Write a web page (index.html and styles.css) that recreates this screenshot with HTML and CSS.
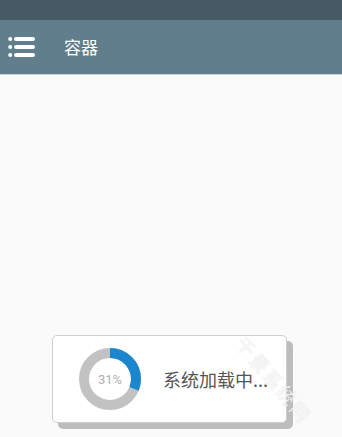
FILE: index.html
```html
<!DOCTYPE html>
<html lang="zh">
<head>
<meta charset="utf-8">
<link rel="stylesheet" href="styles.css">
</head>
<body>
<div class="statusbar"></div>
<header class="appbar">
  <svg class="menu" width="28" height="22" viewBox="0 0 28 22">
    <circle cx="2.2" cy="3" r="2" fill="#fff"/>
    <circle cx="2.2" cy="11" r="2" fill="#fff"/>
    <circle cx="2.2" cy="19" r="2" fill="#fff"/>
    <rect x="6" y="1" width="21" height="4" rx="2" fill="#fff"/>
    <rect x="6" y="9" width="21" height="4" rx="2" fill="#fff"/>
    <rect x="6" y="17" width="21" height="4" rx="2" fill="#fff"/>
  </svg>
  <span class="title">容器</span>
</header>
<main class="content">
  <div class="dialog">
    <div class="ring">
      <svg width="64" height="64" viewBox="0 0 64 64">
        <circle cx="32" cy="32" r="26" fill="none" stroke="#c2c2c2" stroke-width="10"/>
        <circle cx="32" cy="32" r="26" fill="none" stroke="#1a86d0" stroke-width="10"
          stroke-dasharray="50.65 200" transform="rotate(-90 32 32)"/>
      </svg>
      <span class="pct">31%</span>
    </div>
    <span class="msg">系统加载中...</span>
  </div>
  <div class="watermark">千景系统网</div>
</main>
</body>
</html>
```
FILE: styles.css
```css
html, body {
  margin: 0;
  padding: 0;
}
body {
  width: 342px;
  height: 437px;
  overflow: hidden;
  background: #fafafa;
  font-family: "Noto Sans CJK SC", "Noto Sans", sans-serif;
  display: flex;
  flex-direction: column;
}
.statusbar {
  height: 20px;
  background: #475b66;
  flex: none;
}
.appbar {
  height: 54px;
  background: #617e8c;
  border-bottom: 1px solid #c9d3d8;
  display: flex;
  align-items: center;
  flex: none;
}
.menu {
  margin-left: 8px;
}
.title {
  margin-left: 28px;
  color: #fff;
  font-size: 17px;
  line-height: 20px;
}
.content {
  flex: 1;
  position: relative;
  padding-top: 260px;
  padding-left: 52px;
}
.dialog {
  width: 233px;
  height: 86px;
  background: #fff;
  border: 1px solid #cfcfcf;
  border-radius: 5px;
  box-shadow: 6px 6px 0 #bdbdbd;
  display: flex;
  align-items: center;
}
.ring {
  position: relative;
  width: 64px;
  height: 64px;
  margin-left: 25px;
  flex: none;
}
.ring svg {
  display: block;
}
.pct {
  position: absolute;
  inset: 0;
  display: flex;
  align-items: center;
  justify-content: center;
  font-family: "Roboto", sans-serif;
  font-size: 13px;
  color: #b0b0b0;
}
.msg {
  margin-left: 21px;
  font-size: 18px;
  color: #555;
  white-space: nowrap;
}
.watermark {
  position: absolute;
  left: 248px;
  top: 258px;
  font-size: 19px;
  line-height: 20px;
  letter-spacing: 2px;
  color: rgba(255, 255, 255, 0.85);
  text-shadow: 0 0 1px rgba(0, 0, 0, 0.18);
  transform: rotate(50deg);
  transform-origin: left top;
  white-space: nowrap;
}
```
